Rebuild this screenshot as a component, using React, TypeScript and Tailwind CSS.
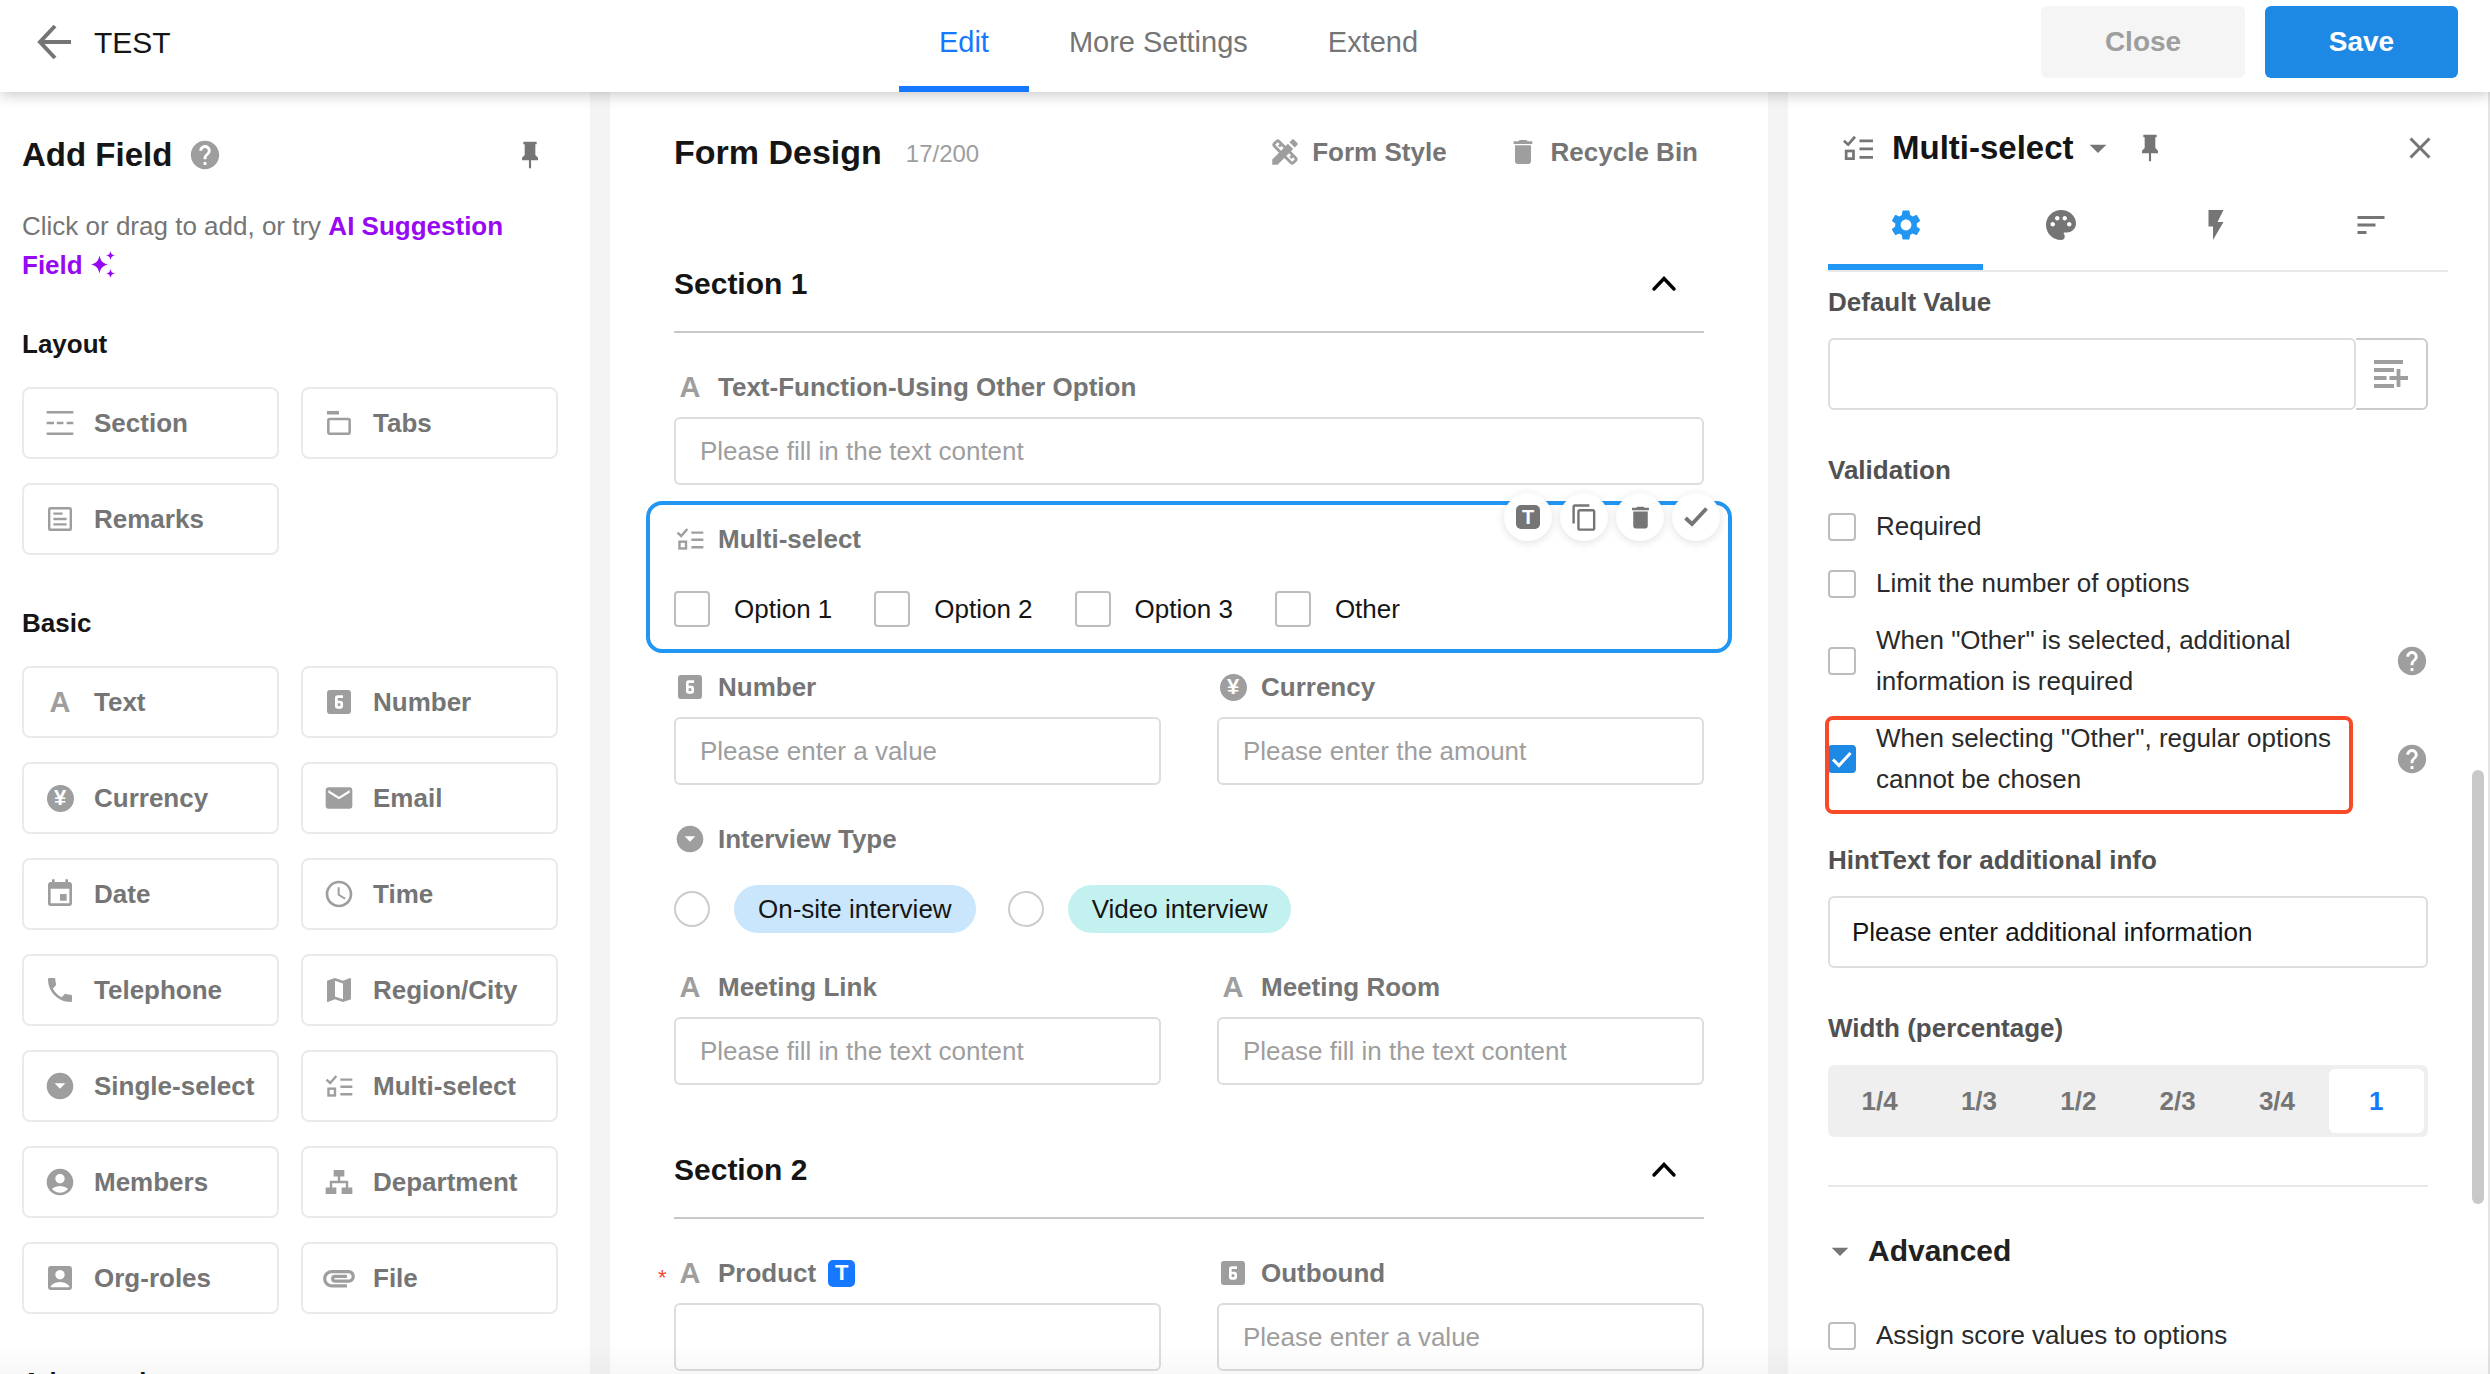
import { useState } from "react";
import type { ReactNode } from "react";
import {
  MdAccessTime,
  MdAccountBox,
  MdAccountCircle,
  MdArrowDropDown,
  MdArrowDropDownCircle,
  MdAttachment,
  MdClose,
  MdContentCopy,
  MdDelete,
  MdDesignServices,
  MdEmail,
  MdEvent,
  MdFlashOn,
  MdHelp,
  MdLooks6,
  MdMap,
  MdPalette,
  MdPhone,
  MdSettings,
  MdSort,
} from "react-icons/md";

/* Icons */

const LetterIcon = () => <span className="text-[29px] leading-8 font-bold">A</span>;

const YenIcon = () => (
  <span className="flex h-[27px] w-[27px] items-center justify-center rounded-full bg-[#9e9e9e] text-[22px] leading-none font-bold text-white">
    ¥
  </span>
);

const PinIcon = () => (
  <svg viewBox="0 0 24 24" className="h-8 w-8 shrink-0" fill="currentColor">
    <path d="M16 12V4h1V2H7v2h1v8l-2 2v2h5.2v6h1.6v-6H18v-2l-2-2z" />
  </svg>
);

const ChecklistIcon = ({ className = "h-8 w-8" }: { className?: string }) => (
  <svg viewBox="0 0 24 24" className={className} fill="none" stroke="currentColor" strokeWidth="1.8">
    <path d="M2.6 7.2l2.8 2.5 4.6-5.2M13 7.2h9M13 12.6h9M13 18.2h9" />
    <rect x="4.1" y="14" width="4.9" height="5.1" />
  </svg>
);

const SectionIcon = () => (
  <svg viewBox="0 0 24 24" className="h-8 w-8" fill="none" stroke="currentColor" strokeWidth="1.9">
    <path d="M2 4h20M2 12h5.5M9.6 12h5M17 12h5M2 20h20" />
  </svg>
);

const TabsIcon = () => (
  <svg viewBox="0 0 24 24" className="h-8 w-8" fill="none" stroke="currentColor" strokeWidth="1.9">
    <path d="M3 4.3h9" strokeWidth="2.7" />
    <rect x="4" y="9" width="16" height="11" rx="1" />
  </svg>
);

const RemarksIcon = () => (
  <svg viewBox="0 0 24 24" className="h-8 w-8" fill="none" stroke="currentColor" strokeWidth="1.8">
    <rect x="3.9" y="3.9" width="16.2" height="16.2" rx="1" />
    <path d="M7 8h7M7 12h10M7 16h10" />
  </svg>
);

const DepartmentIcon = () => (
  <svg viewBox="0 0 24 24" className="h-8 w-8" fill="currentColor">
    <path d="M8 3h8v4.8H8zM2 16.2h8V21H2zM14 16.2h8V21h-8z" />
    <path d="M12 7.5V12M6 16.5V12h12v4.5" fill="none" stroke="currentColor" strokeWidth="1.8" />
  </svg>
);

const SparkleIcon = () => (
  <svg viewBox="0 0 24 27" className="ml-2 inline-block h-[27px] w-6 align-[-4px]" fill="currentColor">
    <path d="M8.5 4.5c1.2 5.6 3 7.6 8.5 9-5.5 1.4-7.3 3.4-8.5 9-1.2-5.6-3-7.6-8.5-9 5.5-1.4 7.3-3.4 8.5-9z" />
    <path d="M19.5 0c.5 2.9 1.5 4 4.5 4.500-3 .5-4 1.600-4.500 4.500-.5-2.900-1.500-4-4.500-4.500 3-.5 4-1.600 4.500-4.500zM19.500 18c.5 2.900 1.500 4 4.500 4.500-3 .5-4 1.600-4.500 4.500-.5-2.900-1.500-4-4.500-4.500 3-.5 4-1.600 4.500-4.500z" />
  </svg>
);

const ChevronUpIcon = () => (
  <svg viewBox="0 0 26 16" className="h-4 w-[26px]" fill="none" stroke="currentColor" strokeWidth="3.4" strokeLinecap="round">
    <path d="M3 13L13 2.500 23 13" />
  </svg>
);

const CheckIcon = () => (
  <svg viewBox="0 0 24 20" className="h-5 w-6" fill="none" stroke="currentColor" strokeWidth="3.8">
    <path d="M1.500 11l6.500 6L22.500 1.500" />
  </svg>
);

const InsertFieldIcon = () => (
  <svg viewBox="0 0 34 30" className="h-[30px] w-[34px]" fill="none" stroke="currentColor" strokeWidth="3.8">
    <path d="M0 3h29M0 11h20M0 19h12.500M0 27h20M15.500 19H34M24.500 10v18" />
  </svg>
);

/* Data */

type FieldType = { name: string; icon: ReactNode };

const layoutFields: FieldType[] = [
  { name: "Section", icon: <SectionIcon /> },
  { name: "Tabs", icon: <TabsIcon /> },
  { name: "Remarks", icon: <RemarksIcon /> },
];

const basicFields: FieldType[] = [
  { name: "Text", icon: <LetterIcon /> },
  { name: "Number", icon: <MdLooks6 size={32} /> },
  { name: "Currency", icon: <YenIcon /> },
  { name: "Email", icon: <MdEmail size={32} /> },
  { name: "Date", icon: <MdEvent size={32} /> },
  { name: "Time", icon: <MdAccessTime size={32} /> },
  { name: "Telephone", icon: <MdPhone size={32} /> },
  { name: "Region/City", icon: <MdMap size={32} /> },
  { name: "Single-select", icon: <MdArrowDropDownCircle size={32} /> },
  { name: "Multi-select", icon: <ChecklistIcon /> },
  { name: "Members", icon: <MdAccountCircle size={32} /> },
  { name: "Department", icon: <DepartmentIcon /> },
  { name: "Org-roles", icon: <MdAccountBox size={32} /> },
  { name: "File", icon: <MdAttachment size={38} /> },
];

const tabs = ["Edit", "More Settings", "Extend"];
const widths = ["1/4", "1/3", "1/2", "2/3", "3/4", "1"];
const options = ["Option 1", "Option 2", "Option 3", "Other"];
const interviewTypes = [
  { name: "On-site interview", color: "bg-[#c9e6fc]" },
  { name: "Video interview", color: "bg-[#c2f1f0]" },
];

const settingTabs = [
  { name: "Properties", icon: <MdSettings size={36} /> },
  { name: "Style", icon: <MdPalette size={36} /> },
  { name: "Events", icon: <MdFlashOn size={36} /> },
  { name: "Description", icon: <MdSort size={36} /> },
];

/* Header */

function Header() {
  const [active, setActive] = useState("Edit");

  return (
    <header className="relative z-10 flex h-[92px] shrink-0 bg-white shadow-[0_2px_14px_rgba(0,0,0,0.24)]">
      <div className="flex flex-[863] items-center gap-[22px] pb-2 pl-9">
        <button aria-label="Back" className="text-[#757575]">
          <svg viewBox="0 0 36 36" className="h-9 w-9" fill="none" stroke="currentColor" strokeWidth="4">
            <path d="M35 18H4M19 2L4 18l15 16" />
          </svg>
        </button>
        <h1 className="text-[30px]">TEST</h1>
      </div>

      <nav className="flex">
        {tabs.map((tab) => (
          <button
            key={tab}
            onClick={() => setActive(tab)}
            className={`border-b-6 px-10 text-[29px] ${
              active === tab ? "border-[#1677ff] text-[#1677ff]" : "border-transparent text-[#757575]"
            }`}
          >
            {tab}
          </button>
        ))}
      </nav>

      <div className="flex flex-[1000] items-start justify-end gap-5 pt-1.5 pr-8">
        <button className="h-[72px] w-[204px] rounded-md bg-[#f5f5f5] text-[28px] font-bold text-[#9e9e9e]">Close</button>
        <button className="h-[72px] w-[193px] rounded-md bg-[#1e88e5] text-[28px] font-bold text-white">Save</button>
      </div>
    </header>
  );
}

/* Left panel */

function FieldGroup({ title, fields }: { title: string; fields: FieldType[] }) {
  return (
    <section>
      <h3 className="mb-[23px] leading-10 font-bold">{title}</h3>
      <div className="grid grid-cols-2 gap-x-[22px] gap-y-6">
        {fields.map((f) => (
          <button
            key={f.name}
            className="flex h-[72px] items-center gap-[18px] rounded-lg border-2 border-[#eaeaea] pl-5 font-bold whitespace-nowrap text-[#757575]"
          >
            <span className="flex w-8 shrink-0 justify-center text-[#9e9e9e] [&>svg]:shrink-0">{f.icon}</span>
            {f.name}
          </button>
        ))}
      </div>
    </section>
  );
}

function AddFieldPanel() {
  return (
    <aside className="w-[590px] shrink-0 overflow-hidden bg-white pt-[43px] pr-8 pl-[22px]">
      <div className="flex h-10 items-center">
        <h2 className="text-[33px] font-bold">Add Field</h2>
        <button aria-label="Help" className="ml-4 text-[#9e9e9e]">
          <MdHelp size={34} />
        </button>
        <button aria-label="Pin panel" className="mr-3 ml-auto text-[#757575]">
          <PinIcon />
        </button>
      </div>
      <p className="mt-8 mb-[39px] leading-[39px] text-[#757575]">
        Click or drag to add, or try{" "}
        <a href="#ai" className="font-bold text-[#9709f2]">
          AI Suggestion Field
          <SparkleIcon />
        </a>
      </p>
      <div className="flex flex-col gap-12">
        <FieldGroup title="Layout" fields={layoutFields} />
        <FieldGroup title="Basic" fields={basicFields} />
        <FieldGroup title="Advanced" fields={[]} />
      </div>
    </aside>
  );
}

/* Form canvas */

function SectionTitle({ children }: { children: ReactNode }) {
  return (
    <div className="flex h-[69px] items-start justify-between border-b-2 border-[#c8c8c8] pr-[27px]">
      <h3 className="text-[30px] leading-10 font-bold">{children}</h3>
      <button aria-label="Collapse section" className="flex h-10 items-center text-black">
        <ChevronUpIcon />
      </button>
    </div>
  );
}

function FieldLabel({ icon, children }: { icon: ReactNode; children: ReactNode }) {
  return (
    <span className="flex h-10 items-center gap-3 font-bold text-[#757575]">
      <span className="flex w-8 justify-center text-[#9e9e9e]">{icon}</span>
      {children}
    </span>
  );
}

function TextField({ icon, label, placeholder }: { icon: ReactNode; label: ReactNode; placeholder?: string }) {
  return (
    <label className="flex flex-1 flex-col gap-2.5">
      <FieldLabel icon={icon}>{label}</FieldLabel>
      <input
        type="text"
        placeholder={placeholder}
        className="h-[68px] w-full rounded-md border-2 border-[#dddddd] px-6 placeholder:text-[#9e9e9e]"
      />
    </label>
  );
}

function MultiSelectField() {
  const actions = [
    {
      name: "Title",
      icon: (
        <span className="flex h-6 w-6 items-center justify-center rounded-[5px] bg-[#757575] text-[20px] leading-none font-bold text-white">
          T
        </span>
      ),
    },
    { name: "Copy", icon: <MdContentCopy size={29} /> },
    { name: "Delete", icon: <MdDelete size={29} /> },
    { name: "Done", icon: <CheckIcon /> },
  ];

  return (
    <fieldset className="relative -mx-7 -mt-[18px] -mb-5 rounded-2xl border-4 border-[#2196f3] px-6 pt-3.5 pb-4">
      <FieldLabel icon={<ChecklistIcon />}>Multi-select</FieldLabel>
      <div className="mt-[26px] flex h-12 items-center gap-[42px]">
        {options.map((o) => (
          <label key={o} className="flex items-center gap-6">
            <input
              type="checkbox"
              className="h-9 w-9 appearance-none rounded border-2 border-[#bdbdbd] checked:border-[#1e88e5] checked:bg-[#1e88e5]"
            />
            {o}
          </label>
        ))}
      </div>
      <div className="absolute -top-3 right-2 flex gap-2">
        {actions.map((a) => (
          <button
            key={a.name}
            aria-label={a.name}
            className="flex h-12 w-12 items-center justify-center rounded-full bg-white text-[#757575] shadow-[0_2px_10px_rgba(0,0,0,0.12)]"
          >
            {a.icon}
          </button>
        ))}
      </div>
    </fieldset>
  );
}

function FormCanvas() {
  return (
    <main className="min-w-0 flex-1 overflow-hidden bg-white px-16 pt-10">
      <div className="flex h-10 items-center">
        <h2 className="text-[34px] font-bold">Form Design</h2>
        <span className="mt-1 ml-6 text-[24px] text-[#9e9e9e]">17/200</span>
        <button className="ml-auto flex items-center gap-2.5 font-bold text-[#757575]">
          <MdDesignServices size={34} className="text-[#9e9e9e]" />
          Form Style
        </button>
        <button className="mr-1.5 ml-[60px] flex items-center gap-3 font-bold text-[#757575]">
          <MdDelete size={32} className="text-[#9e9e9e]" />
          Recycle Bin
        </button>
      </div>

      <div className="mt-[92px] flex flex-col gap-[34px]">
        <SectionTitle>Section 1</SectionTitle>
        <TextField icon={<LetterIcon />} label="Text-Function-Using Other Option" placeholder="Please fill in the text content" />
        <MultiSelectField />
        <div className="flex gap-14">
          <TextField icon={<MdLooks6 size={32} />} label="Number" placeholder="Please enter a value" />
          <TextField icon={<YenIcon />} label="Currency" placeholder="Please enter the amount" />
        </div>
        <fieldset>
          <FieldLabel icon={<MdArrowDropDownCircle size={32} />}>Interview Type</FieldLabel>
          <div className="mt-[26px] flex h-12 items-center gap-8">
            {interviewTypes.map((t) => (
              <label key={t.name} className="flex items-center gap-6">
                <input
                  type="radio"
                  name="interview"
                  className="h-9 w-9 appearance-none rounded-full border-2 border-[#cccccc] checked:border-8 checked:border-[#1e88e5]"
                />
                <span className={`rounded-full px-6 leading-[48px] ${t.color}`}>{t.name}</span>
              </label>
            ))}
          </div>
        </fieldset>
        <div className="flex gap-14">
          <TextField icon={<LetterIcon />} label="Meeting Link" placeholder="Please fill in the text content" />
          <TextField icon={<LetterIcon />} label="Meeting Room" placeholder="Please fill in the text content" />
        </div>

        <div className="pt-[31px]">
          <SectionTitle>Section 2</SectionTitle>
        </div>
        <div className="relative flex gap-14">
          <span className="absolute top-3.5 -left-4 text-[22px] leading-none text-[#f44336]">*</span>
          <TextField
            icon={<LetterIcon />}
            label={
              <>
                Product
                <span className="flex h-[27px] w-[27px] items-center justify-center rounded-[5px] bg-[#1677ff] text-[22px] leading-none text-white">
                  T
                </span>
              </>
            }
          />
          <TextField icon={<MdLooks6 size={32} />} label="Outbound" placeholder="Please enter a value" />
        </div>
      </div>
    </main>
  );
}

/* Right panel */

function CheckRow({
  label,
  checked = false,
  help = false,
  highlight = false,
}: {
  label: string;
  checked?: boolean;
  help?: boolean;
  highlight?: boolean;
}) {
  return (
    <div className="flex items-center justify-between">
      <label className="relative flex w-[525px] items-center gap-5 leading-[41px] text-[#2a2a2a]">
        <span className="relative h-7 w-7 shrink-0">
          <input
            type="checkbox"
            defaultChecked={checked}
            className="peer block h-7 w-7 appearance-none rounded border-2 border-[#bdbdbd] checked:border-[#1e88e5] checked:bg-[#1e88e5]"
          />
          <svg
            viewBox="0 0 28 28"
            className="pointer-events-none absolute inset-0 hidden peer-checked:block"
            fill="none"
            stroke="white"
            strokeWidth="3"
          >
            <path d="M5 14.500l6 6L22.500 8" />
          </svg>
        </span>
        {label}
        {highlight && (
          <span className="pointer-events-none absolute -top-0.5 right-0 -bottom-3.5 -left-[3px] rounded-lg border-4 border-[#f74a28]" />
        )}
      </label>
      {help && (
        <button aria-label="Help" className="-mr-px text-[#9e9e9e]">
          <MdHelp size={34} />
        </button>
      )}
    </div>
  );
}

function SettingsPanel() {
  const [tab, setTab] = useState("Properties");
  const [width, setWidth] = useState("1");

  return (
    <aside className="relative w-[702px] shrink-0 overflow-hidden border-r-2 border-[#e4e4e4] bg-white pt-6 pr-[60px] pl-10">
      <div className="flex h-16 items-center pl-3 text-[#757575]">
        <ChecklistIcon className="h-9 w-9" />
        <button className="ml-4 flex items-center text-[33px] font-bold text-[#151515]">
          Multi-select
          <MdArrowDropDown size={40} className="ml-1 text-[#757575]" />
        </button>
        <button aria-label="Pin panel" className="ml-4">
          <PinIcon />
        </button>
        <button aria-label="Close panel" className="-mr-2.5 ml-auto">
          <MdClose size={36} />
        </button>
      </div>

      <div className="-mr-5 flex border-b-2 border-[#e8e8e8]">
        {settingTabs.map((t) => (
          <button
            key={t.name}
            aria-label={t.name}
            onClick={() => setTab(t.name)}
            className={`flex h-[90px] flex-1 items-center justify-center border-t-6 border-b-6 border-t-transparent ${
              tab === t.name ? "border-b-[#2196f3] text-[#2196f3]" : "border-b-transparent text-[#757575]"
            }`}
          >
            {t.icon}
          </button>
        ))}
      </div>

      <div className="flex flex-col gap-10 pt-2.5">
        <div className="flex flex-col gap-4">
          <label htmlFor="default-value" className="leading-10 font-bold text-[#515151]">
            Default Value
          </label>
          <div className="flex">
            <input
              id="default-value"
              type="text"
              className="h-[72px] min-w-0 flex-1 rounded-md border-2 border-[#dddddd] px-[22px]"
            />
            <button
              aria-label="Insert field"
              className="flex w-[72px] items-center justify-center rounded-r-md border-2 border-l-0 border-[#cccccc] text-[#9e9e9e]"
            >
              <InsertFieldIcon />
            </button>
          </div>
        </div>

        <div className="flex flex-col gap-4">
          <h3 className="leading-10 font-bold text-[#515151]">Validation</h3>
          <CheckRow label="Required" />
          <CheckRow label="Limit the number of options" />
          <CheckRow label={'When "Other" is selected, additional information is required'} help />
          <CheckRow label={'When selecting "Other", regular options cannot be chosen'} checked help highlight />
        </div>

        <div className="flex flex-col gap-4">
          <label htmlFor="hint-text" className="leading-10 font-bold text-[#515151]">
            HintText for additional info
          </label>
          <input
            id="hint-text"
            type="text"
            defaultValue="Please enter additional information"
            className="h-[72px] rounded-md border-2 border-[#dddddd] px-[22px]"
          />
        </div>

        <div className="flex flex-col gap-[17px]">
          <h3 className="leading-10 font-bold text-[#515151]">Width (percentage)</h3>
          <div className="flex h-[72px] gap-1 rounded-md bg-[#efefef] p-1">
            {widths.map((w) => (
              <button
                key={w}
                onClick={() => setWidth(w)}
                className={`flex-1 rounded-md font-bold ${width === w ? "bg-white text-[#1677ff]" : "text-[#757575]"}`}
              >
                {w}
              </button>
            ))}
          </div>
        </div>
      </div>

      <div className="mt-12 border-t-2 border-[#e8e8e8] pt-11">
        <button className="-ml-2 flex items-center gap-2 text-[30px] leading-10 font-bold text-[#212121]">
          <MdArrowDropDown size={40} className="text-[#757575]" />
          Advanced
        </button>
        <div className="mt-11">
          <CheckRow label="Assign score values to options" />
        </div>
      </div>

      {/* Scrollbar thumb */}
      <div className="absolute top-[678px] right-1 h-[434px] w-3 rounded-full bg-[#c8c8c8]" />
    </aside>
  );
}

export default function App() {
  return (
    <div className="relative flex h-screen flex-col overflow-hidden bg-[#f4f4f4] font-['Liberation_Sans',Arial,sans-serif] text-[26px] text-[#151515]">
      <Header />
      <div className="flex min-h-0 flex-1 gap-5">
        <AddFieldPanel />
        <FormCanvas />
        <SettingsPanel />
      </div>
      <div className="pointer-events-none absolute inset-x-0 bottom-0 h-8 bg-linear-to-t from-black/3 to-transparent" />
    </div>
  );
}
